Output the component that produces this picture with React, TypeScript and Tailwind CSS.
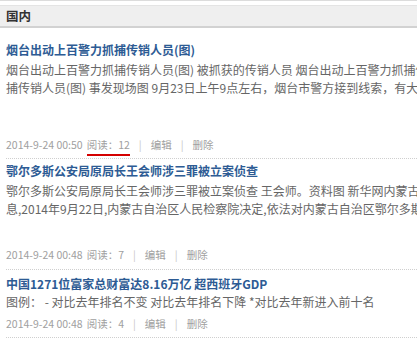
import React from "react";

const font = { fontFamily: '"Noto Sans CJK SC", "Noto Sans", sans-serif' };

function Meta({ date, reads, active }: { date: string; reads: string; active?: boolean }) {
  return (
    <div className="flex items-center h-[18px] text-[10.5px] text-[#a0a0a0] whitespace-nowrap">
      <span>{date}</span>
      <span className="ml-[4px] relative">
        阅读：{reads}
        {active && <span className="absolute left-0 right-0 -bottom-[3px] h-[2px] bg-[#d40000]" />}
      </span>
      <span className="mx-[9px] text-[#c8c8c8]">|</span>
      <span>编辑</span>
      <span className="mx-[9px] text-[#c8c8c8]">|</span>
      <span>删除</span>
    </div>
  );
}

export default function App() {
  return (
    <div className="w-[417px] h-[338px] overflow-hidden bg-white" style={font}>
      <div className="border-t border-[#dcdcdc] pt-[4px]">
        <div className="h-[23px] bg-[#efefef] border-t border-[#e4e4e4] border-b-2 border-b-[#d2d2d2] flex items-center pl-[6px] text-[12.5px] text-[#333] font-semibold">
          国内
        </div>
      </div>

      <div className="pl-[6px] whitespace-nowrap overflow-hidden">
        <div className="pt-[13px]">
          <div className="h-[18px] leading-[18px] text-[12px] font-bold text-[#2d5b94]">烟台出动上百警力抓捕传销人员(图)</div>
          <div className="mt-[2px] text-[12px] leading-[18px] text-[#666]">
            <div>烟台出动上百警力抓捕传销人员(图) 被抓获的传销人员 烟台出动上百警力抓捕传</div>
            <div>捕传销人员(图) 事发现场图 9月23日上午9点左右，烟台市警方接到线索，有大量</div>
          </div>
          <div className="h-[39px]" />
          <Meta date="2014-9-24 00:50" reads="12" active />
          <div className="mt-[4px] border-b border-dotted border-[#cfcfcf]" />
        </div>

        <div className="pt-[3px]">
          <div className="h-[18px] leading-[18px] text-[12px] font-bold text-[#2d5b94]">鄂尔多斯公安局原局长王会师涉三罪被立案侦查</div>
          <div className="mt-[2px] text-[12px] leading-[18px] text-[#666]">
            <div>鄂尔多斯公安局原局长王会师涉三罪被立案侦查 王会师。资料图 新华网内蒙古频道消</div>
            <div>息,2014年9月22日,内蒙古自治区人民检察院决定,依法对内蒙古自治区鄂尔多斯市</div>
          </div>
          <div className="h-[28px]" />
          <Meta date="2014-9-24 00:48" reads="7" />
          <div className="mt-[5px] border-b border-dotted border-[#cfcfcf]" />
        </div>

        <div className="pt-[5px]">
          <div className="h-[18px] leading-[18px] text-[12px] font-bold text-[#2d5b94]">中国1271位富家总财富达8.16万亿 超西班牙GDP</div>
          <div className="text-[12px] leading-[18px] text-[#666]">
            <div>图例： - 对比去年排名不变 对比去年排名下降 *对比去年新进入前十名</div>
          </div>
          <div className="h-[4px]" />
          <Meta date="2014-9-24 00:48" reads="4" />
          <div className="mt-[4px] border-b border-dotted border-[#cfcfcf]" />
        </div>
      </div>
    </div>
  );
}
